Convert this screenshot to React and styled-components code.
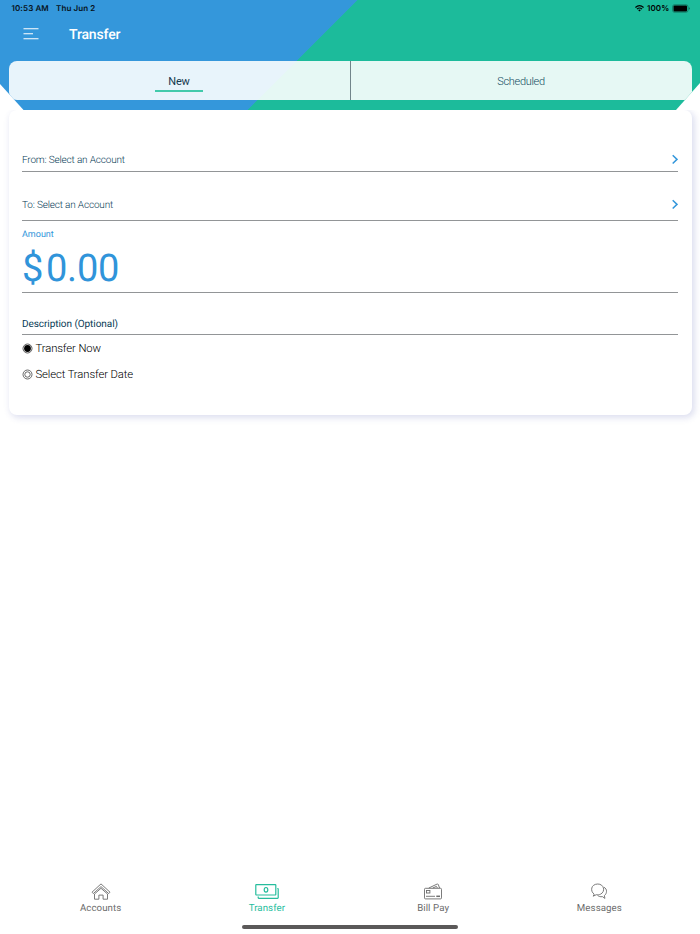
import React, { useState } from 'react';
import styled, { createGlobalStyle } from 'styled-components';

const GlobalStyle = createGlobalStyle`
  * {
    box-sizing: border-box;
  }

  body {
    margin: 0;
    background: #fff;
    font-family: Roboto, 'Liberation Sans', sans-serif;
    text-rendering: geometricPrecision;
  }
`;

const Screen = styled.div`
  width: 700px;
  height: 934px;
  display: flex;
  flex-direction: column;
  overflow: hidden;
`;

const Header = styled.header`
  height: 110px;
  flex: none;
  background: linear-gradient(135deg, #3497db 252.4px, #1cbb9b 253.2px);
  clip-path: polygon(0 0, 100% 0, 100% 83px, 676px 100%, 23.5px 100%, 0 84px);
`;

const StatusBar = styled.div`
  height: 17px;
  padding: 0 10.5px 0 11.5px;
  display: flex;
  align-items: center;
  font-family: Inter, sans-serif;
  font-size: 8px;
  font-weight: 600;
  line-height: 17px;
  letter-spacing: 0.1px;
  color: #07111a;
`;

const StatusText = styled.span`
  width: ${props => props.$width};
  white-space: nowrap;
`;

const StatusIcons = styled.div`
  margin-left: auto;
  display: flex;
  align-items: center;
  gap: 3px;
  color: #000;
`;

const TitleBar = styled.div`
  height: 44px;
  padding-left: 23px;
  display: flex;
  align-items: flex-start;
`;

const MenuButton = styled.button`
  width: 46px;
  height: 34px;
  padding: 0;
  border: none;
  background: none;
  display: flex;
  align-items: center;
`;

const Title = styled.h1`
  margin: 0;
  font-size: 14px;
  font-weight: 500;
  line-height: 37px;
  letter-spacing: -0.15px;
  color: #fff;
`;

const Tabs = styled.div`
  height: 38.5px;
  margin: 0 8.5px;
  display: flex;
  border-radius: 8px;
  background: rgba(255, 255, 255, 0.89);
`;

const Tab = styled.button`
  flex: 1;
  padding: 9px 0 0;
  border: none;
  border-right: ${props => (props.$divider ? '1px solid #71858a' : 'none')};
  background: none;
  display: flex;
  justify-content: center;
  align-items: flex-start;
  font-family: inherit;
  font-size: 11px;
  font-weight: ${props => (props.$active ? 400 : 300)};
  letter-spacing: ${props => (props.$active ? '-0.2px' : '-0.3px')};
  color: ${props => (props.$active ? '#16394f' : '#104a60')};
`;

const TabLabel = styled.span`
  width: ${props => (props.$active ? '48px' : 'auto')};
  height: 22px;
  line-height: 23px;
  border-bottom: 2px solid ${props => (props.$active ? '#42caab' : 'transparent')};
`;

const Card = styled.main`
  height: 305px;
  flex: none;
  margin: 0 8.5px;
  padding: 32px 14px 0 13.5px;
  border-radius: 8px;
  background: #fff;
  box-shadow: 2px 2px 6px 1px rgba(205, 207, 232, 0.65);
  clip-path: inset(0 -12px -14px -12px);
`;

const Field = styled.div`
  height: ${props => props.$height};
  padding-bottom: ${props => props.$bottom || '4px'};
  display: flex;
  align-items: flex-end;
  justify-content: space-between;
  border-bottom: 1px solid #929597;
  font-size: 10px;
  line-height: 17px;
  color: #063a55;

  svg {
    margin-bottom: 1px;
  }
`;

const FieldText = styled.span`
  height: 15px;
  font-weight: ${props => props.$weight || 300};
  letter-spacing: ${props => props.$spacing || '-0.17px'};
`;

const AmountField = styled.div`
  height: 72px;
  padding-top: 6px;
  border-bottom: 1px solid #929597;
  color: #3094da;
`;

const AmountLabel = styled.div`
  height: 14px;
  font-size: 9px;
  line-height: 16px;
`;

const AmountValue = styled.div`
  display: flex;
  font-size: 38px;
  font-weight: 400;
  line-height: 57px;
  letter-spacing: -0.25px;
`;

const Currency = styled.span`
  width: 24px;
`;

const RadioGroup = styled.div`
  height: 52px;
`;

const RadioRow = styled.label`
  height: 26px;
  display: flex;
  align-items: center;
  gap: 2.5px;
  font-size: 11.3px;
  font-weight: 300;
  letter-spacing: -0.11px;
  color: #000;
`;

const TabBar = styled.nav`
  height: 44px;
  margin-top: auto;
  padding: 0 17.5px;
  flex: none;
  display: flex;
`;

const TabBarItem = styled.a`
  flex: 1;
  display: flex;
  flex-direction: column;
  align-items: center;
  font-size: 9.7px;
  line-height: 14px;
  letter-spacing: 0.08px;
  color: ${props => (props.$active ? '#26bd9d' : '#6c6c6c')};

  svg {
    height: 20px;
    margin-top: 1px;
  }
`;

const HomeIndicator = styled.div`
  width: 216px;
  height: 4px;
  margin: 0 auto 5.5px;
  flex: none;
  border-radius: 2px;
  background: #5b5959;
`;

const MenuIcon = () => (
  <svg width="16" height="12" viewBox="0 0 16 12" stroke="#fff" strokeWidth="1.1">
    <path d="M.5 .7h15M.5 5.7h9.5M.5 10.7h15" />
  </svg>
);

const WifiIcon = () => (
  <svg width="9" height="7" viewBox="0 0 9 7" fill="none" stroke="currentColor" strokeWidth="1.2">
    <path d="M.4 2.5q4.1-3.6 8.2 0M1.9 4.1q2.6-2.2 5.2 0" />
    <path d="M3.1 5.1q1.4-1 2.8 0L4.5 6.6z" fill="currentColor" stroke="none" />
  </svg>
);

const BatteryIcon = () => (
  <svg width="18" height="9" viewBox="0 0 18 9">
    <rect x=".5" y=".7" width="15.5" height="7.6" rx="2" fill="none" stroke="#000" strokeOpacity=".4" strokeWidth=".7" />
    <rect x="1.5" y="1.6" width="13.5" height="5.8" rx="1" />
    <path d="M16.8 3.3q1 .4 1 1.2t-1 1.2z" fillOpacity=".5" />
  </svg>
);

const ChevronIcon = () => (
  <svg width="6" height="15" viewBox="0 0 6 15" fill="none" stroke="#3497db" strokeWidth="1.5">
    <path d="M.7 4.3 5 8.4.7 12.5" />
  </svg>
);

const RadioIcon = ({ checked }) => (
  <svg width="11" height="11" viewBox="0 0 11 11" fill="none">
    <circle cx="5.5" cy="5.5" r="4.5" stroke={checked ? '#333' : '#444'} strokeWidth=".8" />
    {checked
      ? <circle cx="5.5" cy="5.5" r="3.4" fill="#000" />
      : <circle cx="5.5" cy="5.5" r="2.7" stroke="#444" strokeWidth=".8" />}
  </svg>
);

const HomeIcon = () => (
  <svg width="20" viewBox="0 0 20 20" fill="none" stroke="currentColor" strokeWidth=".9" strokeLinejoin="round">
    <path d="M1 10.2 10 1.9l9 8.3-1.3 1.4L10 4.6l-7.7 7z" />
    <path d="M3.5 12v5.2h4.4v-4.1h4.2v4.1h4.4V12L10 6.3z" />
  </svg>
);

const CashIcon = () => (
  <svg width="24" viewBox="0 0 24 20" fill="none" stroke="currentColor" strokeWidth="1.2">
    <rect x=".8" y="2.6" width="20" height="10.4" rx=".5" />
    <ellipse cx="11" cy="7.8" rx="1.8" ry="2.3" />
    <path d="M3.2 14.5v1.3q0 .5.5.5h18.9q.6 0 .6-.5V6.9q0-.4-.5-.4h-.4" />
  </svg>
);

const CardsIcon = () => (
  <svg width="18" viewBox="0 0 18 20" fill="none" stroke="currentColor" strokeWidth=".9">
    <rect x=".5" y="6.3" width="17" height="10.6" rx="1" />
    <path d="M4.8 6 13.2 2q.7-.2 1 .4L15.6 6M8.8 6l3.6-1.6L13.4 6" />
    <rect x="2.5" y="8.5" width="3.4" height="2.5" />
    <path d="M2 14.3h9" />
    <path d="M12.3 14.3h3.7" strokeWidth="1.5" />
  </svg>
);

const ChatIcon = () => (
  <svg width="16" viewBox="0 0 16 20" fill="none" stroke="currentColor" strokeWidth=".9" strokeLinejoin="round">
    <path d="M3.2 12.2C-1 9.2-.2 2.2 6.7 2c6.3-.1 8 7.5 3 10.1-1.4.8-3 .9-4.4.6L2.2 14.2z" />
    <path d="M13 5.3c3.5 1.7 3.1 6.2.4 8.3l.5 2.8-2.5-1.8c-2 .4-3.6 0-4.9-1.4" />
  </svg>
);

const navItems = [
  { name: 'Accounts', Icon: HomeIcon },
  { name: 'Transfer', Icon: CashIcon },
  { name: 'Bill Pay', Icon: CardsIcon },
  { name: 'Messages', Icon: ChatIcon },
];

const App = () => {
  const [tab, setTab] = useState('New');
  const [when, setWhen] = useState('Transfer Now');

  return (
    <Screen>
      <GlobalStyle />
      <Header>
        <StatusBar>
          <StatusText $width="44.5px">10:53 AM</StatusText>
          <StatusText>Thu Jun 2</StatusText>
          <StatusIcons>
            <WifiIcon />
            <StatusText $width="21.5px">100%</StatusText>
            <BatteryIcon />
          </StatusIcons>
        </StatusBar>
        <TitleBar>
          <MenuButton><MenuIcon /></MenuButton>
          <Title>Transfer</Title>
        </TitleBar>
        <Tabs>
          {['New', 'Scheduled'].map((name, i) => (
            <Tab key={name} $active={tab === name} $divider={i === 0} onClick={() => setTab(name)}>
              <TabLabel $active={tab === name}>{name}</TabLabel>
            </Tab>
          ))}
        </Tabs>
      </Header>

      <Card>
        <Field $height="29.5px">
          <FieldText>From: Select an Account</FieldText>
          <ChevronIcon />
        </Field>
        <Field $height="49px" $bottom="8px">
          <FieldText>To: Select an Account</FieldText>
          <ChevronIcon />
        </Field>
        <AmountField>
          <AmountLabel>Amount</AmountLabel>
          <AmountValue>
            <Currency>$</Currency>
            <span>0.00</span>
          </AmountValue>
        </AmountField>
        <Field $height="42.5px" $bottom="3px">
          <FieldText $weight={400} $spacing="-0.06px">Description (Optional)</FieldText>
        </Field>
        <RadioGroup>
          {['Transfer Now', 'Select Transfer Date'].map(option => (
            <RadioRow key={option} onClick={() => setWhen(option)}>
              <RadioIcon checked={when === option} />
              {option}
            </RadioRow>
          ))}
        </RadioGroup>
      </Card>

      <TabBar>
        {navItems.map(({ name, Icon }) => (
          <TabBarItem key={name} $active={name === 'Transfer'}>
            <Icon />
            {name}
          </TabBarItem>
        ))}
      </TabBar>
      <HomeIndicator />
    </Screen>
  );
};

export default App;
